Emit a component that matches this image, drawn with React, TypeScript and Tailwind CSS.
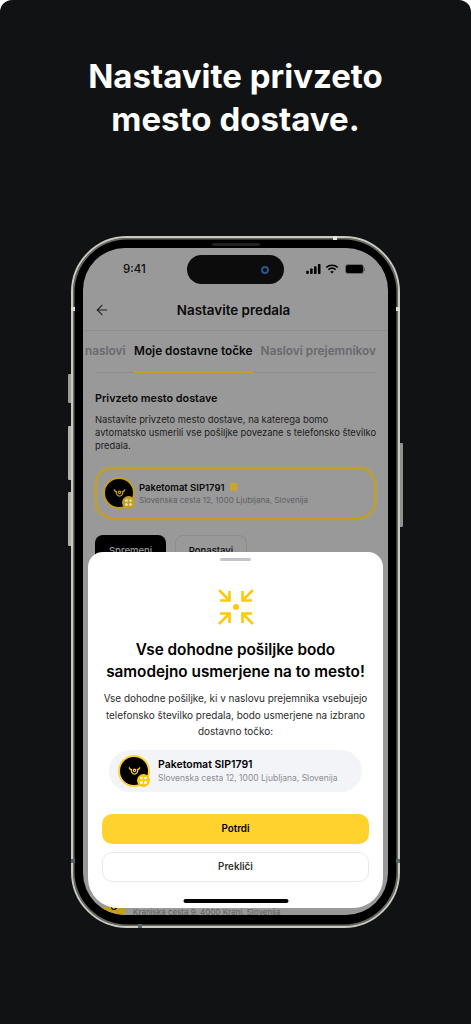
import React from 'react';
import { ArrowLeft } from 'lucide-react';

const Horn = ({ className, color }: { className: string; color: string }) => (
  <svg viewBox="0 0 16 12" className={className} fill="none" stroke={color} strokeWidth="1.5" strokeLinecap="round">
    <path d="M1.5 2C2 3.5 3.2 4.2 4.6 4.2" />
    <path d="M14.5 2c-.5 1.5-1.7 2.2-3.1 2.2" />
    <path d="M3.8 4.2c.3 3.6 2.2 5.6 4.2 5.6s3.900-2 4.200-5.600" />
    <circle cx="8" cy="5.200" r="1.500" />
  </svg>
);

const Avatar = ({ ring, badge, dot, horn }: { ring: string; badge: string; dot: string; horn: string }) => (
  <div className={`relative w-8 h-8 rounded-full bg-black border-2 shrink-0 flex items-center justify-center ${ring}`}>
    <Horn className="w-[13px] h-[10px]" color={horn} />
    <div className={`absolute -right-[2px] -bottom-[2px] w-[13px] h-[13px] rounded-full grid grid-cols-2 gap-[1.5px] p-[3px] ${badge}`}>
      <span className={`rounded-full ${dot}`} />
      <span className={`rounded-full ${dot}`} />
      <span className={`rounded-full ${dot}`} />
      <span className={`rounded-full ${dot}`} />
    </div>
  </div>
);

const StatusIcons = () => (
  <div className="flex items-center gap-[4px]">
    <svg viewBox="0 0 16 11" className="w-[15px] h-[10px]" fill="#000">
      <rect x="0" y="7.500" width="2.800" height="3.500" rx="0.700" />
      <rect x="4.300" y="5" width="2.800" height="6" rx="0.700" />
      <rect x="8.600" y="2.500" width="2.800" height="8.500" rx="0.700" />
      <rect x="12.900" y="0" width="2.800" height="11" rx="0.700" />
    </svg>
    <svg viewBox="0 0 16 12" className="w-[14px] h-[10px]" fill="none" stroke="#000" strokeWidth="1.900">
      <path d="M1 4.200c4-3.600 10-3.600 14 0" />
      <path d="M3.600 6.800c2.600-2.200 6.200-2.200 8.800 0" />
      <path d="M8 11.500 5.900 9.200c1.200-1 3-1 4.200 0z" fill="#000" stroke="none" />
    </svg>
    <div className="flex items-center ml-[2px]">
      <div className="w-[19px] h-[10px] rounded-[3px] bg-black border border-[#6a6a6a]" />
      <div className="w-[1px] h-[3px] bg-[#5a5a5a]" />
    </div>
  </div>
);

const FocusIcon = () => (
  <svg viewBox="0 0 36 36" className="w-9 h-9" fill="none" stroke="#FFC90B" strokeWidth="2.600">
    <path d="M1 1 11 11M2 11.500h9.500V2" />
    <path d="M35 1 25 11M34 11.500h-9.500V2" />
    <path d="M1 35 11 25M2 24.500h9.500V34" />
    <path d="M35 35 25 25M34 24.500h-9.500V34" />
    <circle cx="18" cy="18" r="3" fill="#FFC90B" stroke="none" />
  </svg>
);

export default function App() {
  return (
    <div className="w-[471px] h-[1024px] overflow-hidden bg-[#111214] rounded-t-[12px] font-['Inter',sans-serif] flex flex-col items-center">
      <h1 className="mt-[55px] text-[33px] leading-[43px] font-bold text-white text-center whitespace-nowrap">
        Nastavite privzeto
        <br />
        mesto dostave.
      </h1>

      {/* Phone */}
      <div className="relative mt-[95px] w-[329px] h-[692px] rounded-[56px] bg-black border-[2px] border-[#c9c9c1] p-[10px] shadow-[inset_0_0_0_1.500px_#6a6a64]">
        {/* side buttons */}
        <div className="absolute -left-[5px] top-[136px] w-[3px] h-[29px] bg-[#9a9c96] rounded-l-[1px]" />
        <div className="absolute -left-[5px] top-[188px] w-[3px] h-[54px] bg-[#b0b2ac] rounded-l-[1px]" />
        <div className="absolute -left-[5px] top-[254px] w-[3px] h-[54px] bg-[#b0b2ac] rounded-l-[1px]" />
        <div className="absolute -right-[5px] top-[205px] w-[3px] h-[84px] bg-[#8f918c] rounded-r-[1px]" />
        {/* antenna bands */}
        <div className="absolute -left-[2px] top-[69px] w-[4px] h-[4px] bg-[#d8d8d4]" />
        <div className="absolute -right-[2px] top-[69px] w-[4px] h-[4px] bg-[#d8d8d4]" />
        <div className="absolute -left-[2px] top-[621px] w-[4px] h-[4px] bg-[#5a6468]" />
        <div className="absolute -right-[2px] top-[621px] w-[4px] h-[4px] bg-[#5a6468]" />
        <div className="absolute left-[260px] -top-[2px] w-[4px] h-[4px] bg-[#e4e4e0]" />
        <div className="absolute left-[65px] -bottom-[2px] w-[4px] h-[4px] bg-[#5f6a6f]" />
        <div className="absolute top-[5px] left-1/2 -translate-x-1/2 w-[48px] h-[3px] rounded-full bg-[#222]" />

        <div className="relative w-[305px] h-[667px] rounded-[42px] overflow-hidden bg-[#999999]">
          {/* Status bar */}
          <div className="h-[42px] flex items-center justify-between pl-[40px] pr-[23px]">
            <span className="text-[11.500px] leading-[14px] font-medium text-[#0d0d0d]">9:41</span>
            <StatusIcons />
          </div>

          {/* Header */}
          <div className="h-[41px] border-b border-[#8b8c90] flex items-center relative justify-center pr-[4px]">
            <ArrowLeft className="absolute left-[11px] w-[16px] h-[16px] text-[#222]" strokeWidth={1.600} />
            <span className="text-[13.400px] font-semibold text-[#0a0a0a]">Nastavite predala</span>
          </div>

          {/* Tabs */}
          <div className="mx-[12px] h-[42px] border-b border-[#8b8c90] flex items-stretch relative">
            <span className="absolute -left-[10px] top-0 pt-[12px] text-[11.800px] leading-[16px] font-semibold text-[#68696e]">naslovi</span>
            <div className="ml-[39px] pt-[12px] border-b-2 border-[#c4a022] -mb-[1px] h-[42px] text-[11.800px] leading-[16px] font-semibold text-[#0a0a0a] whitespace-nowrap">
              Moje dostavne točke
            </div>
            <span className="ml-[8px] pt-[12px] text-[11.800px] leading-[16px] font-semibold text-[#68696e] whitespace-nowrap">Naslovi prejemnikov</span>
          </div>

          {/* Default place */}
          <div className="px-[12px] pt-[19px]">
            <h2 className="text-[10.800px] leading-[14px] font-semibold text-[#0a0a0a]">Privzeto mesto dostave</h2>
            <p className="mt-[7px] text-[9.400px] leading-[13px] text-[#1c1c1c] whitespace-nowrap">
              Nastavite privzeto mesto dostave, na katerega bomo
              <br />
              avtomatsko usmerili vse pošiljke povezane s telefonsko številko
              <br />
              predala.
            </p>

            <div className="mt-[15px] h-[52px] rounded-[18px] border-2 border-[#c4a022] shadow-[0_0_0_2px_#a39d80] flex items-center gap-[4px] px-[6px]">
              <Avatar ring="border-[#c4a022]" badge="bg-[#c4a022]" dot="bg-[#e0d8a8]" horn="#c4a022" />
              <div>
                <div className="flex items-center gap-[5px]">
                  <span className="text-[9.500px] leading-[13px] font-semibold text-[#0a0a0a]">Paketomat SIP1791</span>
                  <svg viewBox="0 0 7 9" className="w-[7px] h-[9px]" fill="#c9a52a">
                    <path d="M0 0h7v9L3.500 6.800 0 9z" />
                  </svg>
                </div>
                <p className="text-[8px] leading-[12px] text-[#5e5f64]">Slovenska cesta 12, 1000 Ljubljana, Slovenija</p>
              </div>
            </div>

            <div className="mt-[16px] flex gap-[9px]">
              <button className="w-[71px] h-[32px] rounded-[8px] bg-black text-[#999] text-[9.500px] font-medium">Spremeni</button>
              <button className="w-[72px] h-[32px] rounded-[8px] border border-[#8b8c90] text-[#0a0a0a] text-[9.500px] font-medium">Ponastavi</button>
            </div>
          </div>

          {/* Peek of the list behind the sheet */}
          <div className="absolute left-[20px] bottom-0 h-[8px] w-[22px] bg-[#c4a022] flex justify-center">
            <div className="w-[6px] h-[3px] rounded-b-full border-b border-x border-black" />
          </div>
          <span className="absolute left-[50px] -bottom-[2px] text-[8px] leading-[9px] text-[#5e5f64] whitespace-nowrap">Kranjska cesta 9, 4000 Kranj, Slovenija</span>

          {/* Sheet */}
          <div className="absolute left-[5px] top-[304px] w-[295px] h-[356px] rounded-t-[15px] rounded-b-[30px] bg-white flex flex-col items-center px-[14px]">
            <div className="mt-[6px] w-[31px] h-[3px] rounded-full bg-[#c2c5cc] shrink-0" />
            <div className="mt-[28px] shrink-0"><FocusIcon /></div>
            <h3 className="mt-[14px] text-[15.300px] leading-[22px] font-semibold text-black text-center whitespace-nowrap">
              Vse dohodne pošiljke bodo
              <br />
              samodejno usmerjene na to mesto!
            </h3>
            <p className="mt-[7px] text-[9.950px] leading-[16.500px] text-[#2b2b2b] text-center whitespace-nowrap">
              Vse dohodne pošiljke, ki v naslovu prejemnika vsebujejo
              <br />
              telefonsko številko predala, bodo usmerjene na izbrano
              <br />
              dostavno točko:
            </p>
            <div className="mt-[10px] w-[253px] h-[42px] shrink-0 rounded-full bg-[#f3f4f8] flex items-center gap-[8px] pl-[9px]">
              <Avatar ring="border-[#FFD22E]" badge="bg-[#FFC90B]" dot="bg-white" horn="#FFD22E" />
              <div>
                <div className="text-[10.500px] leading-[14px] font-semibold text-black">Paketomat SIP1791</div>
                <div className="text-[8.500px] leading-[12px] text-[#8a8c93]">Slovenska cesta 12, 1000 Ljubljana, Slovenija</div>
              </div>
            </div>
            <button className="mt-[22px] w-[267px] h-[30px] pt-[1px] shrink-0 rounded-[10px] bg-[#FFD22E] text-[9.800px] font-semibold text-black">Potrdi</button>
            <button className="mt-[8px] w-[267px] h-[30px] pt-[1px] shrink-0 rounded-[10px] bg-white border border-[#e8e9ef] text-[9.800px] font-semibold text-[#333]">Prekliči</button>
          </div>

          <div className="absolute left-1/2 -translate-x-1/2 bottom-[12px] w-[105px] h-[4px] rounded-full bg-black" />
        </div>

        {/* Dynamic island */}
        <div className="absolute left-[114px] top-[17px] w-[97px] h-[29px] rounded-full bg-[#0c0c0c] flex items-center justify-end pr-[15px]">
          <div className="w-[8px] h-[8px] rounded-full border-[2px] border-[#2a5688]" />
        </div>
      </div>
    </div>
  );
}
